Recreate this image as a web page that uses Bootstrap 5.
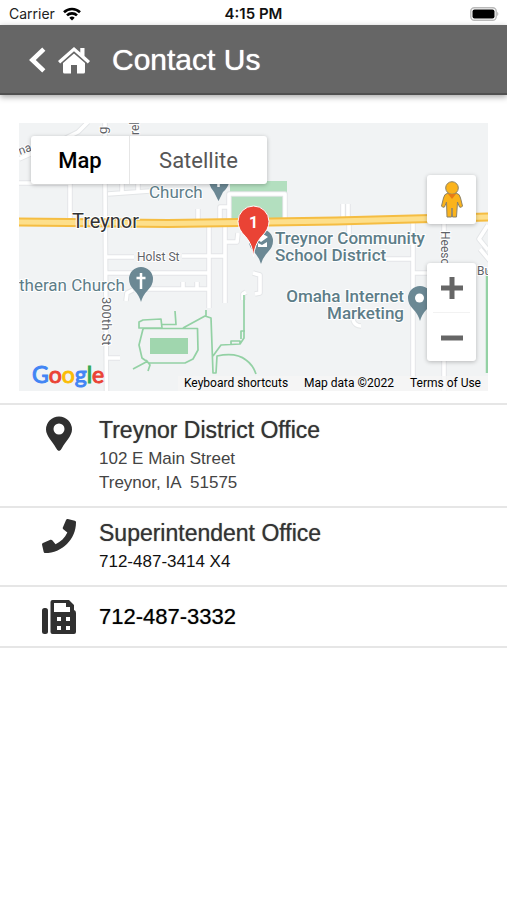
<!DOCTYPE html>
<html lang="en">
<head>
<meta charset="utf-8">
<meta name="viewport" content="width=device-width, initial-scale=1">
<title>Contact Us</title>
<link href="https://cdn.jsdelivr.net/npm/bootstrap@5.3.0/dist/css/bootstrap.min.css" rel="stylesheet">
<style>
  body { font-family: "Liberation Sans", Arial, sans-serif; color: #000; background: #fff; }
  .status { height: 25px; padding: 2px 8px 0 9px; font: 14px/24px Inter, sans-serif; color: #222; }
  .status .clock { font-size: 15px; font-weight: 600; color: #111; }
  .topbar { height: 70px; padding: 2px 28px 0; background: #666; border-bottom: 2px solid #505050; box-shadow: 0 2px 6px rgba(0,0,0,.35); }
  .topbar h1 { font-size: 30px; line-height: 36px; color: #fff; text-shadow: 0 0 1px #fff; }
  .map-wrap { margin: 28px 19px 12px; height: 268px; background: #f1f3f4; font-family: Roboto, sans-serif; }
  .map-art { font-family: Roboto, sans-serif; }
  .ctl { background: #fff; box-shadow: 0 1px 4px rgba(0,0,0,.25); border-radius: 3px; }
  .map-type { top: 13px; left: 12px; height: 48px; }
  .map-type button { font-size: 22px; color: #565656; width: 137px; }
  .map-type button.on { width: 99px; color: #000; font-weight: 500; border-right: 1px solid #e6e6e6 !important; }
  .pegman { top: 52px; right: 12px; width: 49px; height: 49px; }
  .zoomer { top: 140px; right: 12px; width: 49px; height: 98px; }
  .zoomer hr { margin: 0 6px; color: #ccc; }
  .logo { left: 13px; bottom: 2px; font: 400 23px/30px Lato, sans-serif; -webkit-text-stroke: 1px; }
  .b { color: #4285f4; } .r { color: #ea4335; } .y { color: #fbbc05; } .g { color: #34a853; }
  .legal { right: 0; bottom: 0; padding: 0 7px 0 6px; gap: 16px; font-size: 12px; line-height: 15px; background: rgba(245,245,245,.75); }
  .legal a, .legal button { color: #000; }
  .contacts { border-top: 2px solid #e6e6e6; }
  .entry { border-bottom: 2px solid #e6e6e6; padding: 11px 19px 11px 40px; color: #000; }
  .entry .glyph { width: 38px; margin-right: 21px; }
  .entry h2 { font-size: 23px; line-height: 28px; margin: 0; color: #333; text-shadow: 0 0 1px #777; }
  .entry p { font-size: 17px; line-height: 24px; margin: 3px 0 0; color: #444; white-space: pre-wrap; }
  .entry p.num { color: #111; }
  .entry h2.num { font-size: 22px; line-height: 37px; color: #000; }
</style>
<script src="https://cdn.jsdelivr.net/npm/bootstrap@5.3.0/dist/js/bootstrap.bundle.min.js"></script>
</head>
<body>
<div class="status d-flex align-items-center position-relative">
  <span>Carrier</span>
  <svg class="ms-2" width="18" height="14" viewBox="0 0 18 14" fill="none" stroke="#000" stroke-width="2.6" aria-hidden="true"><path d="M1 5.2a11.5 11.5 0 0 1 16 0M4 8.4a7.2 7.2 0 0 1 10 0"/><path d="M9 13.6 6.3 10.8a4 4 0 0 1 5.4 0z" fill="#000" stroke="none"/></svg>
  <span class="clock position-absolute start-50 translate-middle-x">4:15 PM</span>
  <svg class="ms-auto" width="29" height="14" viewBox="0 0 29 14" aria-hidden="true"><rect x=".8" y=".8" width="25.4" height="12.4" rx="3.5" fill="#fff" stroke="#b9b9b9" stroke-width="1.4"/><rect x="2.5" y="2.5" width="22" height="9" rx="2" fill="#000"/><path d="M27.3 4.8q2 2.2 0 4.4z" fill="#aaa"/></svg>
</div>
<header class="topbar d-flex align-items-center">
  <a href="#back" aria-label="Back" class="d-flex"><svg width="18" height="28" viewBox="0 0 18 28" fill="none" stroke="#fff" stroke-width="4.6"><path d="M15.8 3.2 4.4 14l11.4 10.8"/></svg></a>
  <a href="#home" aria-label="Home" class="d-flex ms-2"><svg width="38" height="30" viewBox="-4 0 38 30" fill="#fff"><path d="M0 16 16 2l6.300 5.400V3h4.200v8L32 16l-2.200 2.400L16 6.300 2.200 18.400z"/><path d="M5 18 16 8.500 27 18v9q0 1.500-1.500 1.500H19V20h-6v8.500H6.500Q5 28.500 5 27z"/></svg></a>
  <h1 class="mb-0 ms-3 ps-1">Contact Us</h1>
</header>
<main>
  <section class="map-wrap position-relative overflow-hidden" aria-label="Map of Treynor">
    <svg class="map-art d-block w-100 h-100" viewBox="19 123 469 268" preserveAspectRatio="xMidYMid slice">
      <path fill="#a8dab5" fill-opacity=".85" d="M230 181h57v38h-57z"/>
      <g fill="none" stroke-linejoin="round">
        <g stroke="#e3e5e7" stroke-width="5.500">
          <path id="rd" d="M88 122 78 132 62 140 19 159M19 183H70V222M105 123V185L106.500 391M108 194 150 191M122 183v10M138 183v8M106 257H134M182 256H225M106 273H210M146 289H210M183 289v-7M197 289v-7M106 358H120M126 301l1-8 6-3M198 209v14M229 221V194H285V221M220 223v-16h8M209 226V308M225 226V303M225 242h12l1-9M253 273l7 2v18l-5 1M243 300v-6l3-2M343 204v15M348 204v15M349 224v10M413 222V377M444 222V391M385 259H413M413 273H430M488 225 479 239 488 250M480 249l10 12M353 320q2 6 8 6"/>
        </g>
        <use href="#rd" stroke="#fff" stroke-width="3.600"/>
        <path d="M18 222 168 223.500 336 221 489 217" stroke="#f5bd42" stroke-width="9"/>
        <path d="M18 222 168 223.500 336 221 489 217" stroke="#fddf8b" stroke-width="5"/>
        <g stroke="#93d1a4" stroke-width="1.700">
          <path d="M161 328H139V322L143 320 161 319 162 328M161 324.500H176L175 311M143 328.500H197.500L198 350 193 359 185 363H149L142 358 139 345 143 329M148 361 133 369M146 360 150 365 148 371M183 328 205 316 211 318 213 373H216L217 356Q236 352 246 360 253 365 256 374M206 310v6M213 356 221 345 240 344 244 338V295M231 344v-3h9v3M241 339v-8h4"/>
          <path d="M487 270V373" stroke-width="2.500"/>
        </g>
      </g>
      <path fill="#a0d6ae" d="M150 338h38v16h-38z"/>
      <g fill="#6b8894">
        <path d="M209 183h20q-2 6-6 9l-4.500 9-4.500-9q-3-3-5-9z"/>
        <path id="poi" d="M141 302q-2-7-7-12-5-5-5-11a12 12 0 0 1 24 0q0 6-5 11-5 5-7 12z"/>
        <use href="#poi" x="120" y="-38"/>
        <use href="#poi" x="279" y="19"/>
      </g>
      <path d="M141 273v16M136.500 278h9M218.500 182v5" stroke="#fff" stroke-width="2.500"/>
      <path fill="#fff" d="m255 238 8-4 5 3-7 5zM258 243l4 2 5-3v5h-9z"/>
      <circle cx="419.500" cy="298" r="4.500" fill="#fff"/>
      <g fill="#5f6368" font-size="12" stroke="#fff" stroke-width="2" paint-order="stroke">
        <text x="137" y="261">Holst St</text>
        <text transform="translate(102 297) rotate(90)" font-size="13">300th St</text>
        <text transform="translate(441 231) rotate(90)">Heesch</text>
        <text transform="translate(107 134) rotate(-90)" font-size="13">g</text>
        <text transform="translate(139 135) rotate(-90)">rel</text>
        <text transform="translate(20 155) rotate(-20)">na</text>
        <text x="477" y="275">Bu</text>
      </g>
      <g fill="#5d7d88" font-size="17" stroke="#fff" stroke-width="2" paint-order="stroke">
        <text x="149" y="198">Church</text>
        <text x="19" y="291">theran Church</text>
        <g font-weight="500">
          <text x="275" y="244">Treynor Community</text>
          <text x="275" y="261">School District</text>
          <text x="404" y="302" text-anchor="end">Omaha Internet</text>
          <text x="404" y="319" text-anchor="end">Marketing</text>
        </g>
      </g>
      <text x="72" y="228" font-size="20" fill="#333" stroke="#fff" stroke-width="2" paint-order="stroke">Treynor</text>
      <path d="M253.500 256.500q-1-12-8-20-7.500-7-7.500-15a15.500 15.500 0 0 1 31 0q0 8-7.500 15-7 8-8 20z" fill="#ea4335" stroke="#fff" stroke-width="1"/>
      <text x="253.500" y="228" font-size="16" font-weight="700" text-anchor="middle" fill="#fff">1</text>
    </svg>
    <div class="map-type ctl position-absolute d-flex">
      <button type="button" class="on border-0 bg-transparent p-0" aria-pressed="true">Map</button>
      <button type="button" class="border-0 bg-transparent p-0" aria-pressed="false">Satellite</button>
    </div>
    <button type="button" class="pegman ctl position-absolute border-0 p-0 d-flex align-items-center justify-content-center" aria-label="Street View">
      <svg width="24" height="40" viewBox="0 0 24 40" fill="#fbb31b" stroke="#8b8269" stroke-width="1"><path d="M8 13h8q4 1 4.500 5l2 8q-1 2-3 1l-2-5-1 15h-4l-.5-9-.5 9H7L6.500 22l-2 5q-2 1-3-1l2-8Q4 14 8 13z"/><circle cx="12" cy="8" r="6.300"/><path d="M8 14h8l-4 5z" fill="#e77b16" stroke="none"/></svg>
    </button>
    <div class="zoomer ctl position-absolute d-flex flex-column">
      <button type="button" class="border-0 bg-transparent p-0 flex-fill" aria-label="Zoom in"><svg width="22" height="22" viewBox="0 0 22 22" stroke="#666" stroke-width="5"><path d="M0 11h22M11 0v22"/></svg></button>
      <hr>
      <button type="button" class="border-0 bg-transparent p-0 flex-fill" aria-label="Zoom out"><svg width="22" height="22" viewBox="0 0 22 22" stroke="#666" stroke-width="5"><path d="M0 11h22"/></svg></button>
    </div>
    <a href="#google" class="logo position-absolute text-decoration-none"><span class="b">G</span><span class="r">o</span><span class="y">o</span><span class="b">g</span><span class="g">l</span><span class="r">e</span></a>
    <div class="legal position-absolute d-flex">
      <button type="button" class="border-0 bg-transparent p-0">Keyboard shortcuts</button>
      <span>Map data ©2022</span>
      <a href="#terms" class="text-decoration-none">Terms of Use</a>
    </div>
  </section>
  <div class="contacts">
    <a href="#map" class="entry d-flex text-decoration-none">
      <span class="glyph text-center"><svg width="26" height="36" viewBox="0 0 26 36" fill="#303030"><path fill-rule="evenodd" d="M13 35q-1.500 0-3-3C7 26 0 20 0 13.500a13 13 0 0 1 26 0C26 20 19 26 16 32q-1.500 3-3 3zM13 7.500a5.500 5.500 0 1 0 0 11 5.500 5.500 0 0 0 0-11z"/></svg></span>
      <div><h2>Treynor District Office</h2><p>102 E Main Street
Treynor, IA  51575</p></div>
    </a>
    <a href="tel:7124873414" class="entry d-flex text-decoration-none">
      <span class="glyph text-center"><svg width="34" height="34" viewBox="0 0 512 512" fill="#303030"><path d="M493.400 24.600l-104-24c-11.300-2.600-22.900 3.300-27.500 13.900l-48 112c-4.200 9.800-1.400 21.300 6.900 28l60.600 49.600c-36 76.700-98.900 140.500-177.200 177.200l-49.600-60.600c-6.800-8.300-18.200-11.100-28-6.900l-112 48C3.900 366.500-2 378.100.6 389.400l24 104C27.100 504.200 36.700 512 48 512c256.100 0 464-207.500 464-464 0-11.200-7.700-20.900-18.600-23.400z"/></svg></span>
      <div><h2>Superintendent Office</h2><p class="num">712-487-3414 X4</p></div>
    </a>
    <a href="#fax" class="entry d-flex align-items-center text-decoration-none">
      <span class="glyph text-center"><svg class="d-block mx-auto" width="36" height="36" viewBox="0 0 36 36"><rect x="1" y="9" width="6" height="26" rx="2.500" fill="#303030"/><path fill="#303030" fill-rule="evenodd" d="M11.500 1H28l5 5v5q2 .5 2 3v19q0 2-2 2H11.500q-2 0-2-2V3q0-2 2-2zM13 4v9h16V8h-4V4zM16 18v4h4v-4zM25 18v4h4v-4zM16 27v4h4v-4zM25 27v4h4v-4z"/></svg></span>
      <h2 class="num">712-487-3332</h2>
    </a>
  </div>
</main>
</body>
</html>
